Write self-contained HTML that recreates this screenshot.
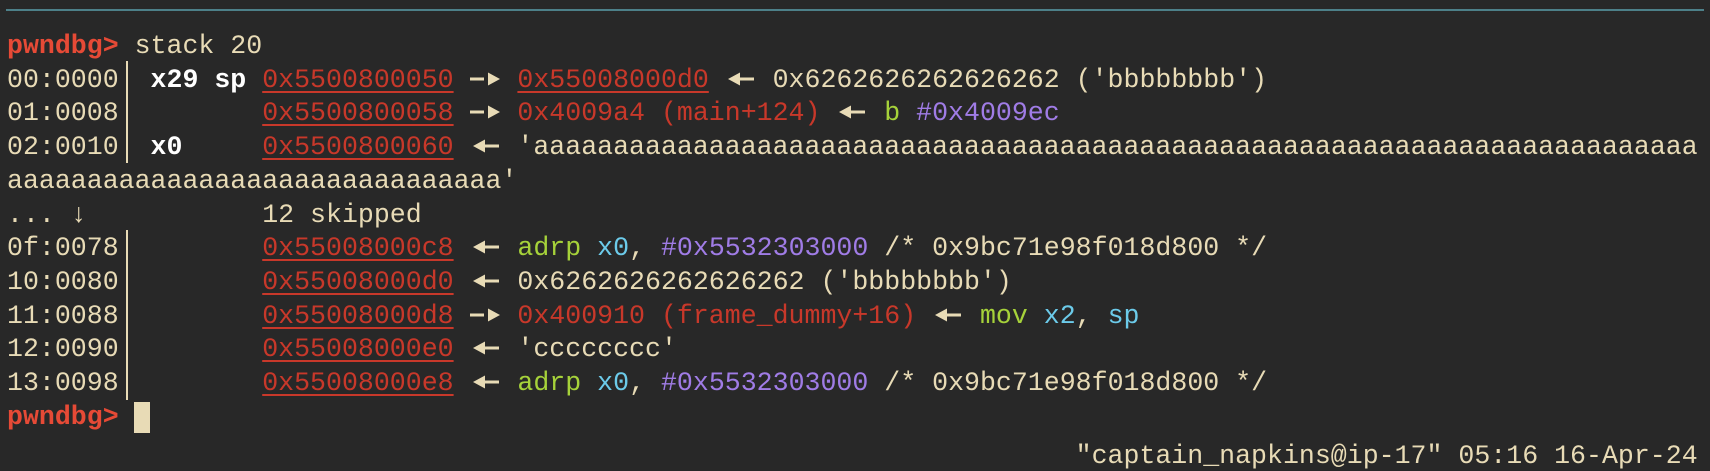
<!DOCTYPE html>
<html><head><meta charset="utf-8"><style>
html,body{margin:0;padding:0;background:#282828;width:1710px;height:458px;overflow:hidden}
pre{position:absolute;left:7px;top:30px;margin:0;font-family:"Liberation Mono","DejaVu Sans Mono",monospace;font-size:26.58px;line-height:33.7px;color:#e8dbb6;white-space:pre}
.p{color:#e64a36;font-weight:bold}
.r{color:#c8382a}
.u{color:#c8382a;text-decoration:underline;text-underline-offset:4px}
.g{color:#a6d23a}
.c{color:#6ccbea}
.v{color:#a07ce6}
.w{color:#fff;font-weight:bold}
.bar{position:absolute;left:126px;width:2px;background:#e8dbb6}
svg{display:inline-block;width:31.9px;height:20px;vertical-align:-2px}
</style></head><body>
<svg width="0" height="0" style="position:absolute"><defs>
<g id="L"><polygon points="3,10 15,3.5 15,16.5" fill="#e8dbb6"/><rect x="14" y="8.5" width="15" height="3" fill="#e8dbb6"/></g>
<g id="R"><rect x="0" y="8.5" width="14" height="3" fill="#e8dbb6"/><polygon points="18,3.5 18,16.5 30,10" fill="#e8dbb6"/></g>
</defs></svg>
<div style="position:absolute;left:6px;top:9px;width:1698px;height:2px;background:#4d8089"></div>
<div class="bar" style="top:61px;height:102px"></div>
<div class="bar" style="top:230px;height:170px"></div>
<div style="position:absolute;left:134px;top:402px;width:16px;height:31px;background:#e8dbb6"></div>
<pre><span class="p">pwndbg&gt;</span> stack 20
00:0000  <span class="w">x29 sp</span> <span class="u">0x5500800050</span> <svg><use href="#R"/></svg> <span class="u">0x55008000d0</span> <svg><use href="#L"/></svg> 0x6262626262626262 ('bbbbbbbb')
01:0008         <span class="u">0x5500800058</span> <svg><use href="#R"/></svg> <span class="r">0x4009a4 (main+124)</span> <svg><use href="#L"/></svg> <span class="g">b</span> <span class="v">#0x4009ec</span>
02:0010  <span class="w">x0</span>     <span class="u">0x5500800060</span> <svg><use href="#L"/></svg> 'aaaaaaaaaaaaaaaaaaaaaaaaaaaaaaaaaaaaaaaaaaaaaaaaaaaaaaaaaaaaaaaaaaaaaaaaa
aaaaaaaaaaaaaaaaaaaaaaaaaaaaaaa'
... ↓           12 skipped
0f:0078         <span class="u">0x55008000c8</span> <svg><use href="#L"/></svg> <span class="g">adrp</span> <span class="c">x0</span>, <span class="v">#0x5532303000</span> /* 0x9bc71e98f018d800 */
10:0080         <span class="u">0x55008000d0</span> <svg><use href="#L"/></svg> 0x6262626262626262 ('bbbbbbbb')
11:0088         <span class="u">0x55008000d8</span> <svg><use href="#R"/></svg> <span class="r">0x400910 (frame_dummy+16)</span> <svg><use href="#L"/></svg> <span class="g">mov</span> <span class="c">x2</span>, <span class="c">sp</span>
12:0090         <span class="u">0x55008000e0</span> <svg><use href="#L"/></svg> 'cccccccc'
13:0098         <span class="u">0x55008000e8</span> <svg><use href="#L"/></svg> <span class="g">adrp</span> <span class="c">x0</span>, <span class="v">#0x5532303000</span> /* 0x9bc71e98f018d800 */
<span class="p">pwndbg&gt;</span>
<span style="position:relative;top:6px">                                                                   "captain_napkins@ip-17" 05:16 16-Apr-24</span></pre>
</body></html>
